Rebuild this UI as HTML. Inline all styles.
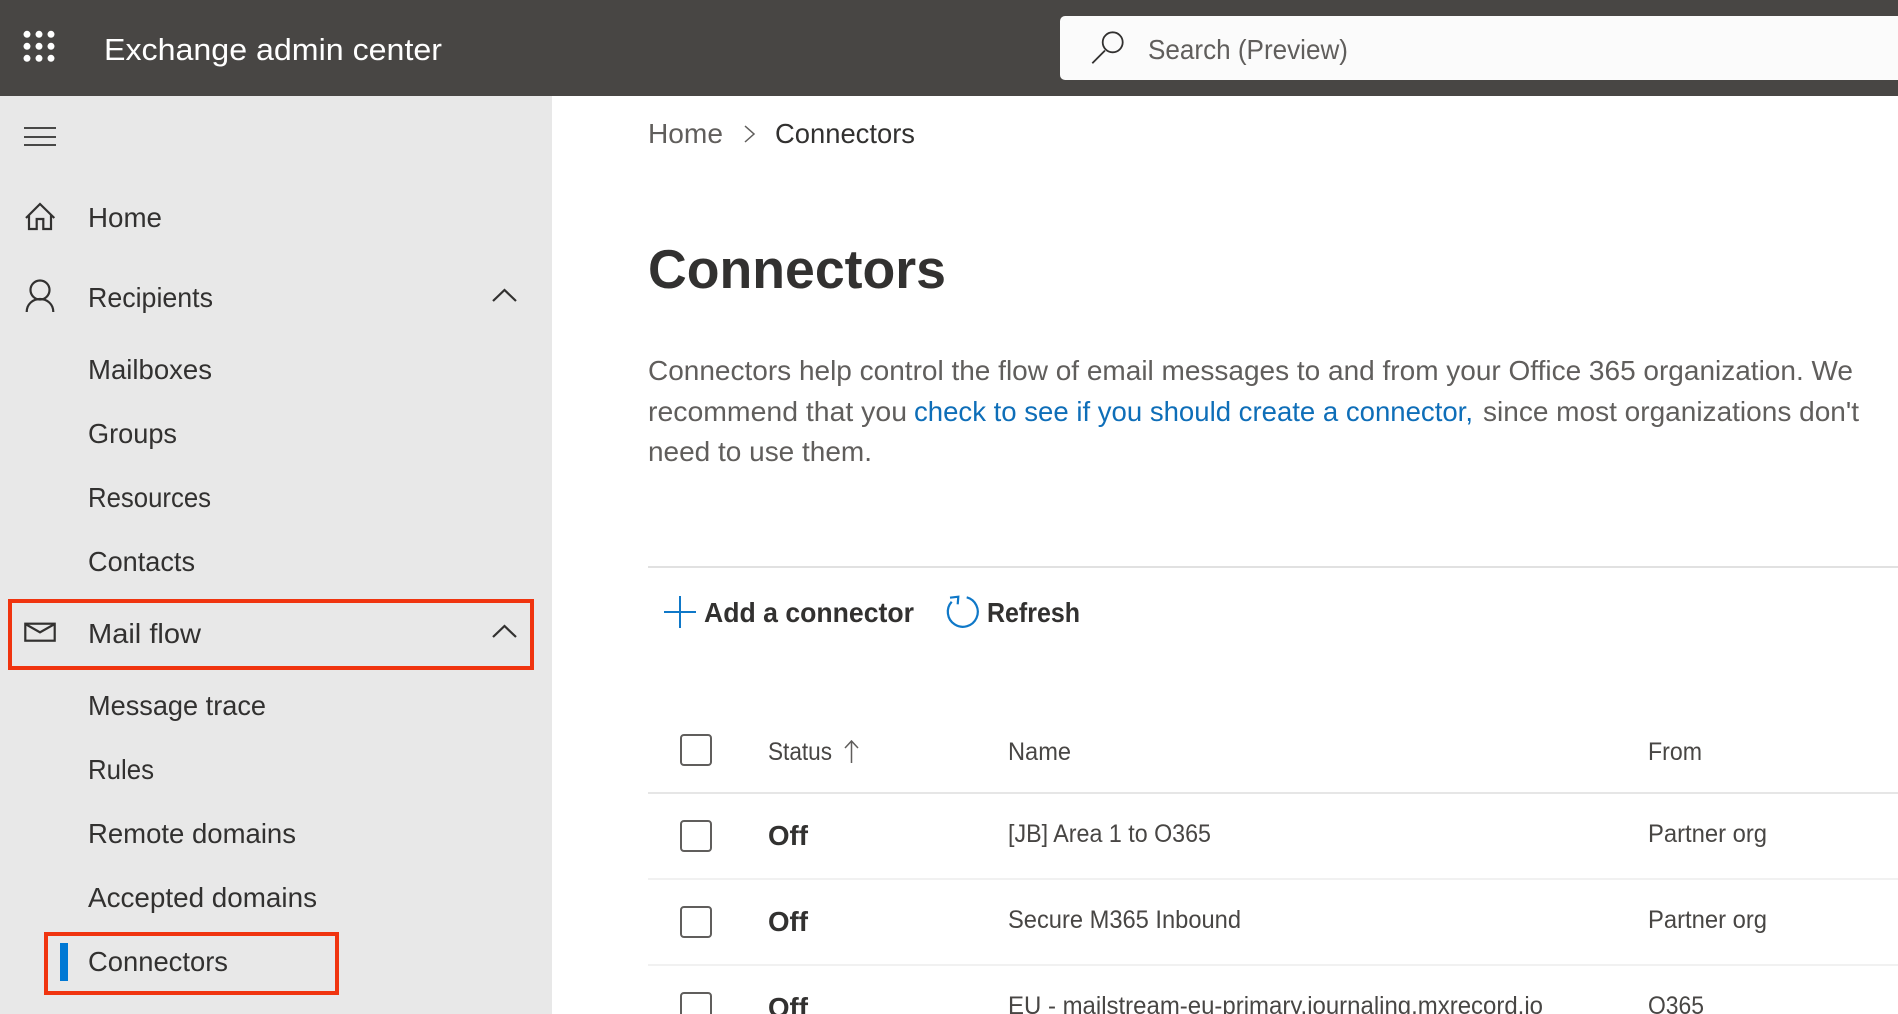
<!DOCTYPE html>
<html><head><meta charset="utf-8"><title>Exchange admin center</title>
<style>
html,body{margin:0;padding:0;background:#fff;width:1898px;height:1014px;overflow:hidden}
svg{display:block}
text{font-family:"Liberation Sans",sans-serif;white-space:pre}
.n{font-size:28px;fill:#323130}
.p{font-size:28px;fill:#605e5c}
.t{font-size:25px;fill:#484644}
.ic{fill:none;stroke:#323130;stroke-width:2.2}
.cb{fill:#fff;stroke:#605e5c;stroke-width:2}
</style></head><body>
<svg width="1898" height="1014" viewBox="0 0 1898 1014" xmlns="http://www.w3.org/2000/svg">
<rect width="1898" height="1014" fill="#fff"/>
<rect width="1898" height="96" fill="#484644"/>
<rect y="96" width="552" height="918" fill="#e8e8e8"/>
<g fill="#fff"><circle cx="27" cy="34.300" r="3.500"/><circle cx="39" cy="34.300" r="3.500"/><circle cx="51" cy="34.300" r="3.500"/><circle cx="27" cy="46.300" r="3.500"/><circle cx="39" cy="46.300" r="3.500"/><circle cx="51" cy="46.300" r="3.500"/><circle cx="27" cy="58.300" r="3.500"/><circle cx="39" cy="58.300" r="3.500"/><circle cx="51" cy="58.300" r="3.500"/></g>
<text x="104" y="60" font-size="31" fill="#fff" textLength="338" lengthAdjust="spacingAndGlyphs">Exchange admin center</text>
<rect x="1060" y="16" width="860" height="64" rx="5" fill="#fbfbfb"/>
<circle cx="1112.700" cy="42.300" r="10" fill="none" stroke="#323130" stroke-width="1.800"/>
<path d="M1105 50.500L1092.300 63.300" fill="none" stroke="#323130" stroke-width="1.800"/>
<text x="1148" y="59" font-size="28" fill="#605e5c" textLength="200" lengthAdjust="spacingAndGlyphs">Search (Preview)</text>

<path d="M24 128H56M24 137H56M24 145H56" fill="none" stroke="#323130" stroke-width="1.800"/>
<path d="M26 218L40 204L54.300 218M29 214.500V229H36.700V219H43.300V229H51V214.500" class="ic"/>
<circle cx="40" cy="290" r="9.500" class="ic"/>
<path d="M26.700 312C26.700 304 33 299 40 299C47 299 53.300 304 53.300 312" class="ic"/>
<path d="M493 301L504.500 290L516 301" class="ic"/>
<rect x="25.300" y="623.700" width="29.400" height="17" class="ic"/>
<path d="M25.300 624L40 632.300L54.700 624" class="ic"/>
<path d="M493 637L504.500 626L516 637" class="ic"/>

<text class="n" x="88" y="227" textLength="74" lengthAdjust="spacingAndGlyphs">Home</text>
<text class="n" x="88" y="307" textLength="125" lengthAdjust="spacingAndGlyphs">Recipients</text>
<text class="n" x="88" y="379" textLength="124" lengthAdjust="spacingAndGlyphs">Mailboxes</text>
<text class="n" x="88" y="443" textLength="89" lengthAdjust="spacingAndGlyphs">Groups</text>
<text class="n" x="88" y="507" textLength="123" lengthAdjust="spacingAndGlyphs">Resources</text>
<text class="n" x="88" y="571" textLength="107" lengthAdjust="spacingAndGlyphs">Contacts</text>
<text class="n" x="88" y="643" textLength="113" lengthAdjust="spacingAndGlyphs">Mail flow</text>
<text class="n" x="88" y="715" textLength="178" lengthAdjust="spacingAndGlyphs">Message trace</text>
<text class="n" x="88" y="779" textLength="66" lengthAdjust="spacingAndGlyphs">Rules</text>
<text class="n" x="88" y="843" textLength="208" lengthAdjust="spacingAndGlyphs">Remote domains</text>
<text class="n" x="88" y="907" textLength="229" lengthAdjust="spacingAndGlyphs">Accepted domains</text>
<text class="n" x="88" y="971" textLength="140" lengthAdjust="spacingAndGlyphs">Connectors</text>

<rect x="10" y="601" width="522" height="67" fill="none" stroke="#f0340f" stroke-width="4"/>
<rect x="46" y="934" width="291" height="59" fill="none" stroke="#f0340f" stroke-width="4"/>
<rect x="60" y="943" width="8" height="38" fill="#0078d4"/>

<text class="p" x="648" y="143" textLength="75" lengthAdjust="spacingAndGlyphs">Home</text>
<path d="M745 126L754 134L745 142" fill="none" stroke="#605e5c" stroke-width="1.500"/>
<text class="n" x="775" y="143" textLength="140" lengthAdjust="spacingAndGlyphs">Connectors</text>
<text x="648" y="288" font-size="55" font-weight="700" fill="#323130" textLength="298" lengthAdjust="spacingAndGlyphs">Connectors</text>

<text class="p" x="648" y="380" textLength="1205" lengthAdjust="spacingAndGlyphs">Connectors help control the flow of email messages to and from your Office 365 organization. We</text>
<text class="p" x="648" y="421" textLength="259" lengthAdjust="spacingAndGlyphs">recommend that you</text>
<text x="914" y="421" font-size="28" fill="#0e6eb8" textLength="559" lengthAdjust="spacingAndGlyphs">check to see if you should create a connector,</text>
<text class="p" x="1483" y="421" textLength="376" lengthAdjust="spacingAndGlyphs">since most organizations don't</text>
<text class="p" x="648" y="461" textLength="224" lengthAdjust="spacingAndGlyphs">need to use them.</text>

<rect x="648" y="566" width="1250" height="2" fill="#e1e1e1"/>
<path d="M664 612H696M680 596V628" fill="none" stroke="#0f78c8" stroke-width="2"/>
<text x="704" y="622" font-size="28" font-weight="700" fill="#323130" textLength="210" lengthAdjust="spacingAndGlyphs">Add a connector</text>
<path d="M966.700 597.300A15 15 0 1 1 951.700 601.700" fill="none" stroke="#0f78c8" stroke-width="2.200"/>
<path d="M950 597.700L958.300 596.700L957.700 604.300" fill="none" stroke="#0f78c8" stroke-width="2.200"/>
<text x="987" y="622" font-size="28" font-weight="700" fill="#323130" textLength="93" lengthAdjust="spacingAndGlyphs">Refresh</text>

<rect class="cb" x="681" y="735" width="30" height="30" rx="3"/>
<text class="t" x="768" y="760" textLength="64" lengthAdjust="spacingAndGlyphs">Status</text>
<path d="M851.500 763V741M845 748L851.500 741L858 748" fill="none" stroke="#605e5c" stroke-width="1.500"/>
<text class="t" x="1008" y="760" textLength="63" lengthAdjust="spacingAndGlyphs">Name</text>
<text class="t" x="1648" y="760" textLength="54" lengthAdjust="spacingAndGlyphs">From</text>
<rect x="648" y="792" width="1250" height="2" fill="#e6e6e6"/>

<rect class="cb" x="681" y="821" width="30" height="30" rx="3"/>
<text x="768" y="845" font-size="28" font-weight="700" fill="#323130" textLength="40" lengthAdjust="spacingAndGlyphs">Off</text>
<text class="t" x="1008" y="842" textLength="203" lengthAdjust="spacingAndGlyphs">[JB] Area 1 to O365</text>
<text class="t" x="1648" y="842" textLength="119" lengthAdjust="spacingAndGlyphs">Partner org</text>
<rect x="648" y="878" width="1250" height="2" fill="#f1f1f1"/>

<rect class="cb" x="681" y="907" width="30" height="30" rx="3"/>
<text x="768" y="931" font-size="28" font-weight="700" fill="#323130" textLength="40" lengthAdjust="spacingAndGlyphs">Off</text>
<text class="t" x="1008" y="928" textLength="233" lengthAdjust="spacingAndGlyphs">Secure M365 Inbound</text>
<text class="t" x="1648" y="928" textLength="119" lengthAdjust="spacingAndGlyphs">Partner org</text>
<rect x="648" y="964" width="1250" height="2" fill="#f1f1f1"/>

<rect class="cb" x="681" y="993" width="30" height="30" rx="3"/>
<text x="768" y="1017" font-size="28" font-weight="700" fill="#323130" textLength="40" lengthAdjust="spacingAndGlyphs">Off</text>
<text class="t" x="1008" y="1014" textLength="535" lengthAdjust="spacingAndGlyphs">EU - mailstream-eu-primary.journaling.mxrecord.io</text>
<text class="t" x="1648" y="1014" textLength="56" lengthAdjust="spacingAndGlyphs">O365</text>
</svg>
</body></html>
